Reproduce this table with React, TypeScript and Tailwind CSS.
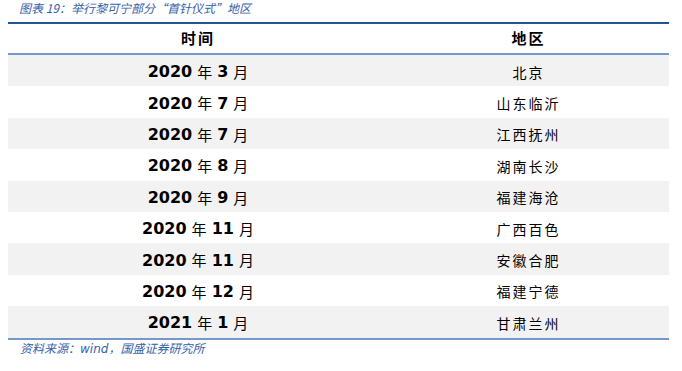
import React from 'react';

interface Row {
  year: string;
  month: string;
  place: string;
}

const rows: Row[] = [
  { year: '2020', month: '3', place: '北京' },
  { year: '2020', month: '7', place: '山东临沂' },
  { year: '2020', month: '7', place: '江西抚州' },
  { year: '2020', month: '8', place: '湖南长沙' },
  { year: '2020', month: '9', place: '福建海沧' },
  { year: '2020', month: '11', place: '广西百色' },
  { year: '2020', month: '11', place: '安徽合肥' },
  { year: '2020', month: '12', place: '福建宁德' },
  { year: '2021', month: '1', place: '甘肃兰州' },
];

const cjk = "font-['DejaVu_Sans','Noto_Sans_CJK_SC',sans-serif]";

export default function App() {
  return (
    <div className="w-[682px] h-[371px] bg-white text-black overflow-hidden">
      {/* caption */}
      <div className="h-[22px] pl-[19px] pt-[1px] text-[12px] leading-[14px] italic text-[#3562ab] font-['Noto_Sans_CJK_SC',sans-serif]">
        图表 19：举行黎可宁部分“首针仪式”地区
      </div>

      <div className="ml-[8px] w-[661px]">
        {/* header */}
        <div className="flex h-[33px] border-t-2 border-b-2 border-t-[#1f5597] border-b-[#7597c9] bg-white">
          <div className="w-[380px] flex items-center justify-center text-[15px] font-bold font-['Noto_Sans_CJK_SC',sans-serif] tracking-[2px]">
            时间
          </div>
          <div className="flex-1 flex items-center justify-center text-[15px] font-bold font-['Noto_Sans_CJK_SC',sans-serif] tracking-[2px]">
            地区
          </div>
        </div>

        {/* body */}
        <div className="border-b-2 border-b-[#7597c9]">
          {rows.map((r, i) => (
            <div
              key={i}
              className={`flex h-[31.4px] ${i % 2 === 0 ? 'bg-[#f2f2f2]' : 'bg-white'}`}
            >
              <div className={`w-[380px] flex items-center justify-center pt-[3px] text-[16px] ${cjk}`}>
                <span className="font-bold">{r.year}</span>
                <span className="mx-[5px] font-['Noto_Sans_CJK_SC',sans-serif] text-[15px]">年</span>
                <span className="font-bold">{r.month}</span>
                <span className="ml-[5px] font-['Noto_Sans_CJK_SC',sans-serif] text-[15px]">月</span>
              </div>
              <div className="flex-1 flex items-center justify-center pt-[3px] text-[14px] tracking-[2px] font-['Noto_Sans_CJK_SC',sans-serif]">
                {r.place}
              </div>
            </div>
          ))}
        </div>
      </div>

      {/* footer */}
      <div className="pl-[20px] pt-[1px] text-[12px] leading-[14px] italic text-[#3562ab] font-['Noto_Sans_CJK_SC',sans-serif]">
        资料来源：<span className="font-['DejaVu_Sans',sans-serif]">wind</span>，国盛证券研究所
      </div>
    </div>
  );
}
